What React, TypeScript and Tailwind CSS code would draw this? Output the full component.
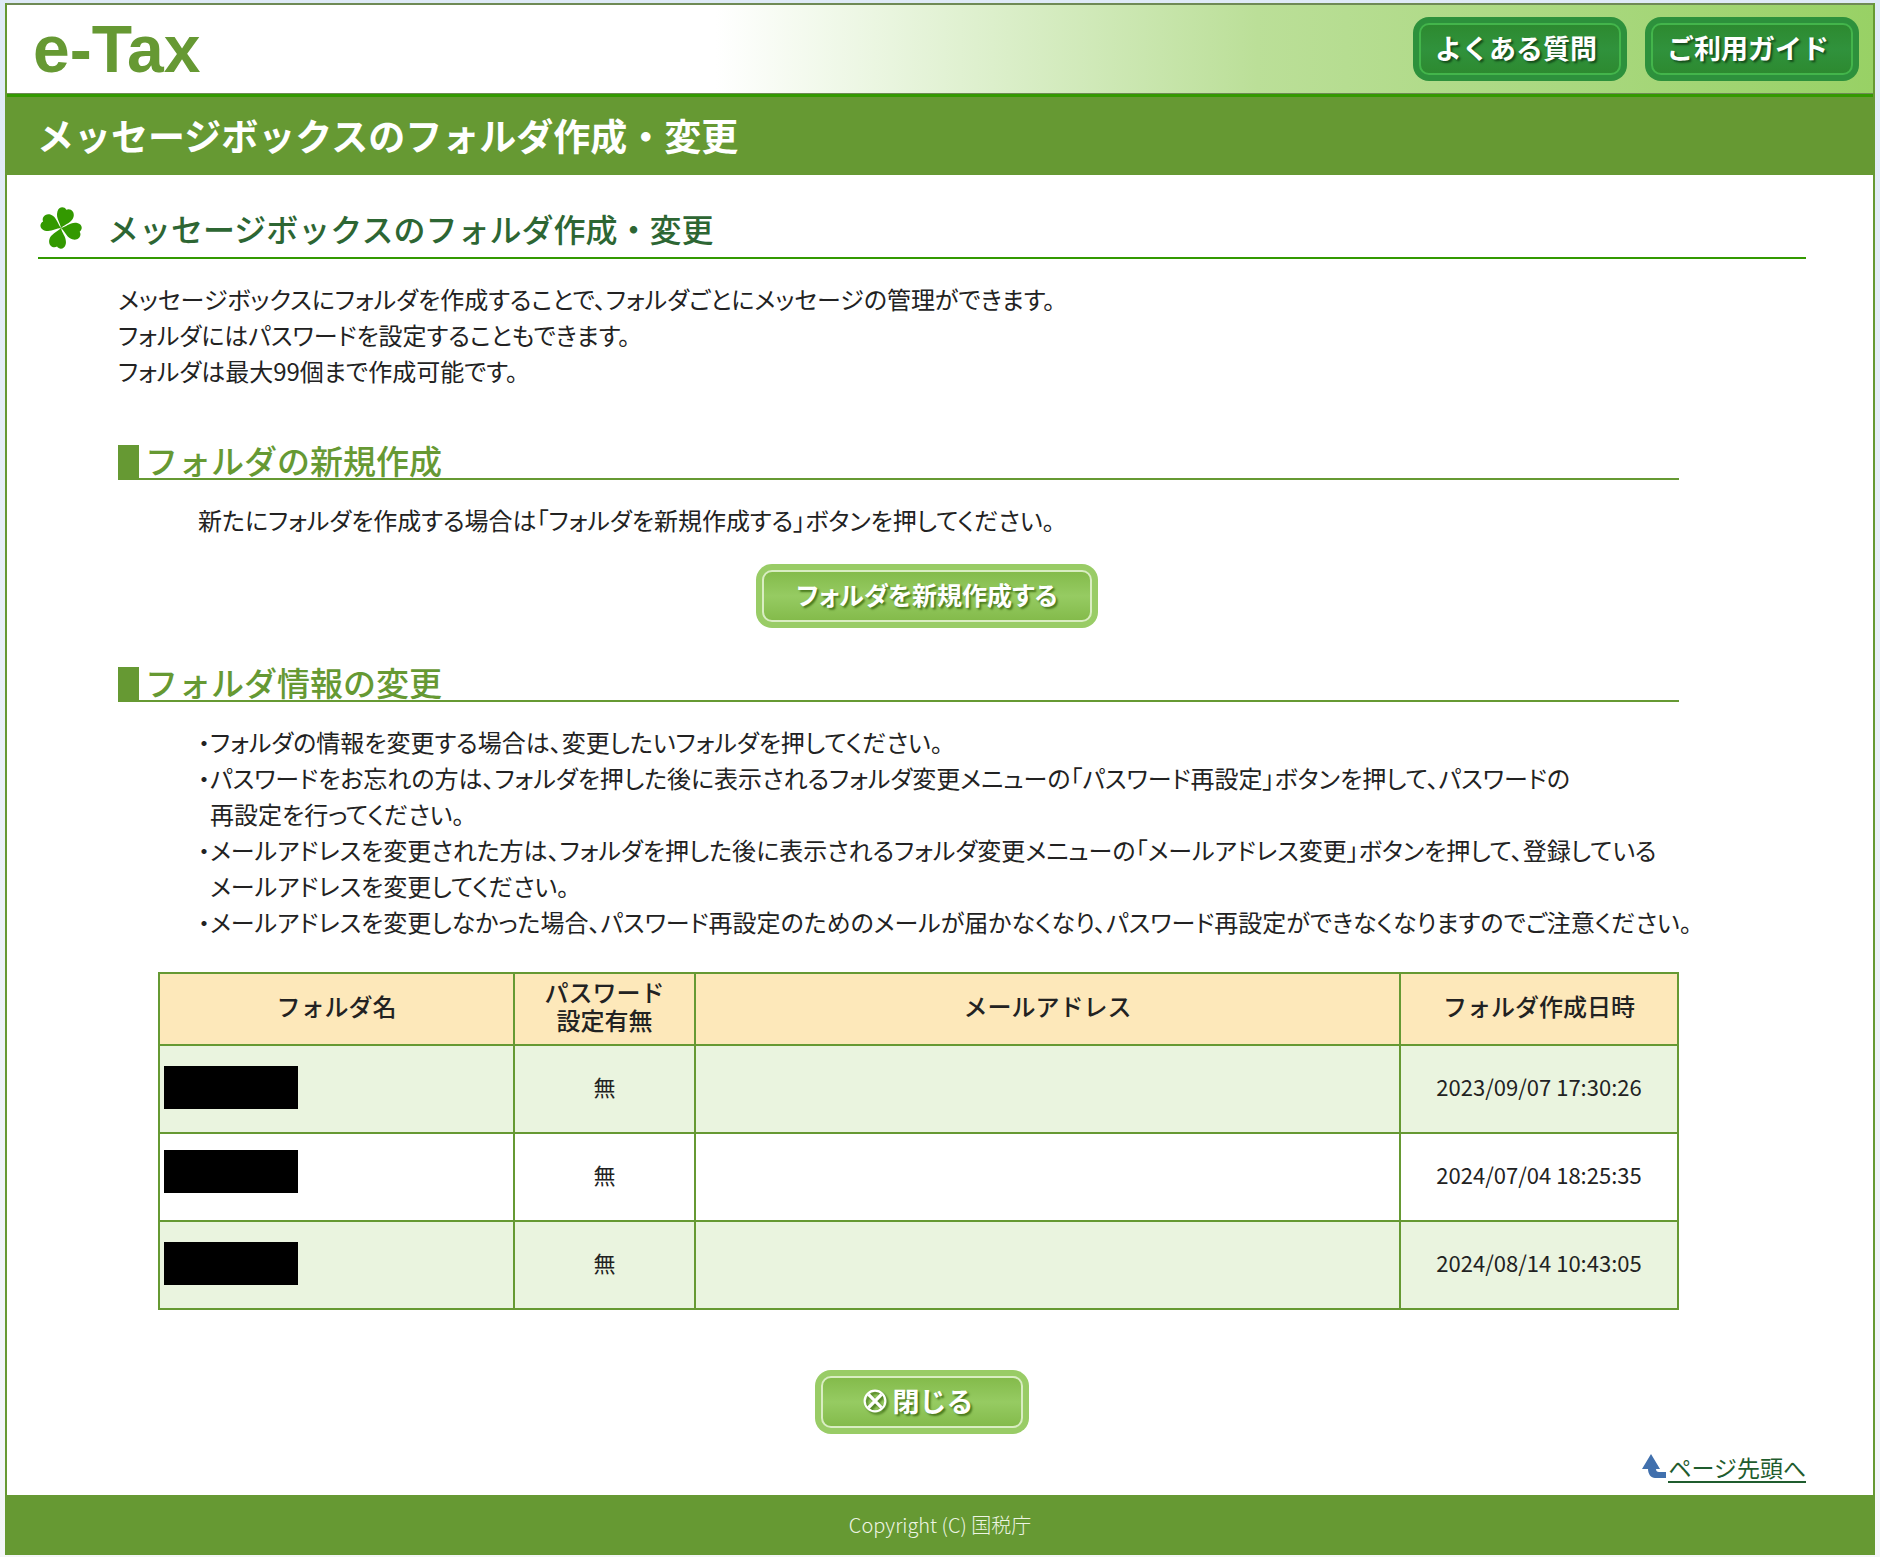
import React from 'react';

interface Folder {
  hasPassword: string;
  email: string;
  createdAt: string;
  maskOffset: string;
}

const folders: Folder[] = [
  { hasPassword: '無', email: '', createdAt: '2023/09/07 17:30:26', maskOffset: 'pt-5' },
  { hasPassword: '無', email: '', createdAt: '2024/07/04 18:25:35', maskOffset: 'pt-4' },
  { hasPassword: '無', email: '', createdAt: '2024/08/14 10:43:05', maskOffset: 'pt-5' },
];

const notes = [
  ['フォルダの情報を変更する場合は、変更したいフォルダを押してください。'],
  [
    'パスワードをお忘れの方は、フォルダを押した後に表示されるフォルダ変更メニューの「パスワード再設定」ボタンを押して、パスワードの',
    '再設定を行ってください。',
  ],
  [
    'メールアドレスを変更された方は、フォルダを押した後に表示されるフォルダ変更メニューの「メールアドレス変更」ボタンを押して、登録している',
    'メールアドレスを変更してください。',
  ],
  ['メールアドレスを変更しなかった場合、パスワード再設定のためのメールが届かなくなり、パスワード再設定ができなくなりますのでご注意ください。'],
];

function Clover() {
  const leaf = 'M0 0 C-2 -5 -8 -8 -8 -15 C-8 -20 -3 -22 0 -19 C3 -22 9 -20 9 -14 C9 -8 3 -5 0 0 Z';
  return (
    <svg width="44" height="44" viewBox="-22 -22 44 44" fill="#339900" aria-hidden="true">
      {[16, 101, 192, 290].map((angle) => (
        <path key={angle} d={leaf} transform={`rotate(${angle})`} />
      ))}
    </svg>
  );
}

function UpArrow() {
  return (
    <svg width="24" height="24" viewBox="0 0 24 24" fill="#4170ad" className="mb-1" aria-hidden="true">
      <path d="M9 0 L18 15 L14 15 C14 17 15 18 17 18 L24 18 L24 24 L13 24 C9 24 6 20 6 15 L0 15 Z" />
    </svg>
  );
}

function CloseMark() {
  return (
    <svg width="24" height="24" viewBox="0 0 22 22" fill="none" stroke="#ffffff" className="drop-shadow-[2px_2px_1px_#4a7a1e]" aria-hidden="true">
      <circle cx="11" cy="11" r="9.5" strokeWidth="2" />
      <path d="M5 5 L17 17 M17 5 L5 17" strokeWidth="3" />
    </svg>
  );
}

function HeaderButton({ label }: { label: string }) {
  return (
    <button type="button" className="h-16 w-[214px] rounded-2xl bg-[#2d913c] p-[6px]">
      <span className="flex h-full items-center justify-center rounded-[10px] border-2 border-[#43b54b] bg-linear-to-b from-[#2d8a30] via-[#30923c] to-[#2d8a30] pr-2 text-[27px] font-bold text-white [text-shadow:2px_2px_2px_#154d1b]">
        {label}
      </span>
    </button>
  );
}

function GreenButton({ wide, children }: { wide?: boolean; children: React.ReactNode }) {
  return (
    <button type="button" className={`${wide ? 'w-[342px]' : 'w-[214px]'} h-16 rounded-2xl bg-[#99cc66] p-[6px]`}>
      <span
        className={`${
          wide ? "text-[25px] [font-feature-settings:'palt']" : 'pr-2 text-[27px]'
        } flex h-full items-center justify-center gap-[6px] rounded-[10px] border-2 border-[#d9edc2] bg-linear-to-b from-[#84bb4b] via-[#96cb62] to-[#84bb4b] pb-[2px] font-bold text-white [text-shadow:2px_2px_2px_#4a7a1e]`}
      >
        {children}
      </span>
    </button>
  );
}

function SectionTitle({ children }: { children: React.ReactNode }) {
  return (
    <h3 className="flex h-[35px] items-end border-b-2 border-[#669933] text-[33px] leading-[35px] font-medium text-[#669933]">
      <span className="mr-[6px] h-[33px] w-[21px] bg-[#669933]" />
      {children}
    </h3>
  );
}

export default function App() {
  return (
    <div className="bg-linear-to-b from-[#dfeaf7] to-[#f4f6f8] px-[5px] pt-[3px] pb-1 font-['Noto_Sans_CJK_JP',sans-serif] text-[#222222]">
      <div id="top" className="border-x-2 border-[#669933] bg-white">
        <header className="flex h-[91px] items-center justify-between border-t-2 border-b border-[#6f8a55] bg-linear-to-r from-white from-38% via-[#bbdf98] via-67% to-[#98d165] pr-[14px] pb-px pl-[26px]">
          <a href="#top" className="font-['Liberation_Sans',sans-serif] text-[66px] leading-none font-bold text-[#669933]">
            e-Tax
          </a>
          <div className="flex gap-[18px]">
            <HeaderButton label="よくある質問" />
            <HeaderButton label="ご利用ガイド" />
          </div>
        </header>

        <h1 className="flex h-[81px] items-center border-t-3 border-[#339900] bg-[#669933] pb-px pl-[30px] text-[37px] font-bold text-white">
          メッセージボックスのフォルダ作成・変更
        </h1>

        <main className="pt-[25px] pr-[67px] pb-3 pl-[31px]">
          <h2 className="flex h-[59px] items-center gap-6 border-b-2 border-[#339900] pb-[2px] pl-px text-[32px] font-medium text-[#2d6633]">
            <Clover />
            メッセージボックスのフォルダ作成・変更
          </h2>

          <div className="mr-[127px] ml-20">
            <p className="mt-[22px] text-[24px] leading-9 [font-feature-settings:'palt']">
              メッセージボックスにフォルダを作成することで、フォルダごとにメッセージの管理ができます。
              <br />
              フォルダにはパスワードを設定することもできます。
              <br />
              フォルダは最大99個まで作成可能です。
            </p>

            <section className="mt-14">
              <SectionTitle>フォルダの新規作成</SectionTitle>
              <p className="mt-[22px] ml-20 text-[24px] leading-9 [font-feature-settings:'palt']">
                新たにフォルダを作成する場合は「フォルダを新規作成する」ボタンを押してください。
              </p>
              <div className="mt-[26px] ml-[57px] flex justify-center">
                <GreenButton wide>フォルダを新規作成する</GreenButton>
              </div>
            </section>

            <section className="mt-[39px]">
              <SectionTitle>フォルダ情報の変更</SectionTitle>
              <ul className="mt-[22px] ml-20 text-[24px] leading-9 whitespace-nowrap [font-feature-settings:'palt']">
                {notes.map((lines) => (
                  <li key={lines[0]} className="flex">
                    <span className="w-3">・</span>
                    <span>
                      {lines.map((line) => (
                        <span key={line} className="block">{line}</span>
                      ))}
                    </span>
                  </li>
                ))}
              </ul>

              <table className="mt-8 ml-10 w-[calc(100%-40px)] table-fixed border-collapse text-center text-[22px]">
                <colgroup>
                  <col className="w-[355px]" />
                  <col className="w-[181px]" />
                  <col />
                  <col className="w-[278px]" />
                </colgroup>
                <thead>
                  <tr className="h-[72px] bg-[#fde8ba] text-[24px] leading-7">
                    <th className="border-2 border-[#669933] pb-1.5 font-medium">フォルダ名</th>
                    <th className="border-2 border-[#669933] pb-1.5 font-medium">パスワード<br />設定有無</th>
                    <th className="border-2 border-[#669933] pb-1.5 font-medium">メールアドレス</th>
                    <th className="border-2 border-[#669933] pb-1.5 font-medium">フォルダ作成日時</th>
                  </tr>
                </thead>
                <tbody>
                  {folders.map((folder) => (
                    <tr key={folder.createdAt} className="h-[88px] odd:bg-[#eaf4df]">
                      <td className={`border-2 border-[#669933] pl-1 align-top ${folder.maskOffset}`}>
                        <div className="h-[43px] w-[134px] bg-black" />
                      </td>
                      <td className="border-2 border-[#669933] pb-1.5">{folder.hasPassword}</td>
                      <td className="border-2 border-[#669933] pb-1.5">{folder.email}</td>
                      <td className="border-2 border-[#669933] pb-1.5">{folder.createdAt}</td>
                    </tr>
                  ))}
                </tbody>
              </table>
            </section>
          </div>

          <div className="mt-[60px] flex justify-center">
            <GreenButton>
              <CloseMark />
              閉じる
            </GreenButton>
          </div>

          <div className="mt-[19px] flex justify-end">
            <a href="#top" className="flex items-center gap-[2px] text-[23px] leading-8 text-[#1f5c2e]">
              <UpArrow />
              <span className="border-b-2 border-[#1f5c2e] leading-7">ページ先頭へ</span>
            </a>
          </div>
        </main>

        <footer className="flex h-[60px] items-center justify-center bg-[#669933] text-xl font-light text-[#eef5e4]">
          Copyright (C) 国税庁
        </footer>
      </div>
    </div>
  );
}
